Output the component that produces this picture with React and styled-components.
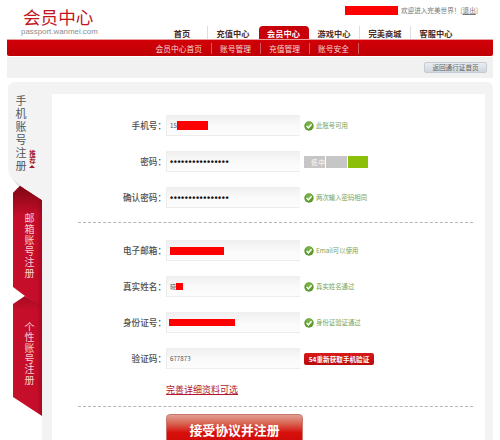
import React from "react";
import styled, { createGlobalStyle } from "styled-components";

const Global = createGlobalStyle`
  html, body { margin: 0; padding: 0; background: #fff; }
  * { box-sizing: border-box; }
`;

const Page = styled.div`
  width: 500px; height: 440px; overflow: hidden; background: #fff;
  font-family: "Liberation Sans", "Noto Sans CJK SC", sans-serif;
`;
const Header = styled.header`display: flex; height: 39px;`;
const Logo = styled.div`display: flex; flex-direction: column; padding: 6px 0 0 21px;`;
const LogoTitle = styled.div`
  font: 400 17.6px/21px "Noto Sans CJK SC", sans-serif; color: #c4151c; margin-left: 2px;
`;
const LogoSub = styled.div`font-size: 7.9px; line-height: 10px; color: #8c8c8c; margin-top: 0;`;
const HeaderRight = styled.div`margin-left: auto; display: flex; flex-direction: column;`;
const TopRow = styled.div`
  display: flex; align-items: center; align-self: flex-end; gap: 3px; margin-top: 6px; margin-right: 22px;
  font: 6.6px/9px "Noto Sans CJK SC", sans-serif; color: #777;
`;
const UserMask = styled.span`display: block; width: 53px; height: 9px; background: #f00;`;
const Logout = styled.span`text-decoration: underline;`;
const Nav = styled.nav`display: flex; margin-top: auto; margin-right: 38px;`;
const NavItem = styled.div`
  width: ${p => (p.$active ? 50 : 51)}px; height: 13px; display: flex; align-items: center; justify-content: center;
  font: 700 8.2px/13px "Noto Sans CJK SC", sans-serif; padding-top: 1px;
  color: ${p => (p.$active ? "#fff" : "#4a2a22")};
  background: ${p => (p.$active ? "#c8000a" : "transparent")};
  border-radius: ${p => (p.$active ? "4px 4px 0 0" : "0")};
  border-right: 1px solid ${p => (p.$sep ? "#ddd" : "transparent")};
`;
const Content = styled.main`padding: 0 7px;`;
const SubNav = styled.div`
  height: 17px; display: flex; align-items: center; padding-left: 140px;
  border-radius: 0 0 2px 2px; border-top: 1px solid #e8a0a0;
  background: linear-gradient(#d20008, #bf0006);
`;
const SubItem = styled.span`
  padding: 0 8.5px; height: 11px; border-right: 1px solid #d9595e;
  font: 7.75px/11px "Noto Sans CJK SC", sans-serif; color: #f6d9d9;
`;
const Toolbar = styled.div`
  height: 21px; margin-top: 1px; background: #f1f1f1; display: flex; align-items: center; justify-content: flex-end; padding-right: 6px;
`;
const BackButton = styled.button`
  width: 63px; height: 11px; padding: 0; border: 1px solid #c5ccd3; border-radius: 2px;
  background: linear-gradient(#e9edf1, #cfd6dd);
  font: 6.6px/9px "Noto Sans CJK SC", sans-serif; color: #666;
`;
const Panel = styled.section`display: flex; margin-top: 4px; height: 360px;`;
const Rail = styled.div`
  width: 35px; flex: none; display: flex; flex-direction: column; align-items: flex-end; position: relative;
  &::before {
    content: ""; position: absolute; left: 3px; top: 93px; width: 18px; height: 13px;
    background: linear-gradient(35deg, #fff 20%, #8f8f8f 75%);
    clip-path: polygon(0 0, 100% 60%, 100% 100%, 50% 100%);
  }
`;
const ActiveTab = styled.div`
  width: 35px; height: 118px; flex: none; position: relative; z-index: 2; background: #f3f3f3;
  clip-path: path("M8 0 H35 V118 L13 103 C8 99 1 95 1 86 V8 Q1 0 8 0 Z");
  padding: 13px 0 0 8px; display: flex; gap: 2px;
`;
const ActiveLabel = styled.div`
  writing-mode: vertical-rl; font: 400 11px/12px "Noto Sans CJK SC", sans-serif; letter-spacing: 2px; color: #555; height: 85px;
`;
const Recommend = styled.div`
  width: 7px; margin-top: 55px; text-align: center;
  font: 700 6.5px/7px "Noto Sans CJK SC", sans-serif; color: #a31a2c;
  &::after {
    content: ""; display: block; width: 0; height: 0; margin: 1px 0 0 0;
    border-left: 3.5px solid transparent; border-right: 3.5px solid transparent; border-bottom: 3px solid #a31a2c;
  }
`;
const RedTab = styled.div`
  width: 29px; height: ${p => p.$h}px; margin-top: ${p => p.$mt}px; flex: none; position: relative;
  clip-path: polygon(${p => p.$shape});
  background: linear-gradient(90deg, #c60f2b 0%, #c50d2a 82%, #a40a1f 100%);
  padding-top: ${p => p.$pt}px; padding-right: 7px;
  writing-mode: vertical-rl; font: 400 10px/11px "Noto Sans CJK SC", sans-serif; letter-spacing: ${p => p.$ls}px; color: #f7cfd4;
  &::before {
    content: ""; position: absolute; left: 0; right: 0; top: 0; height: ${p => p.$sh}px;
    background: linear-gradient(#7f0613, transparent);
    opacity: ${p => p.$shade};
  }
`;
const MainWrap = styled.div`flex: 1; background: #f3f3f3; padding: 12px 8px 0 10px; border-radius: 0 6px 0 0;`;
const Main = styled.div`height: 348px; background: #fff; padding-top: 21px;`;
const Row = styled.div`display: flex; align-items: center; height: 21px; margin-bottom: 15px;`;
const Label = styled.label`
  width: 114px; text-align: right; font: 500 8.6px/21px "Noto Sans CJK SC", sans-serif; color: #4d4d4d;
`;
const Field = styled.div`
  width: 134px; height: 21px; display: flex; align-items: center; padding-left: ${p => p.$pl || 3}px; gap: 0;
  border: 1px solid #ededed; border-right: 0; border-top-color: #efefef;
  background: linear-gradient(#f0f0f0, #fafafa 55%, #fcfcfc);
  font: 6.2px/10px "Noto Sans CJK SC", sans-serif; color: #555;
`;
const Mask = styled.span`display: block; width: ${p => p.$w}px; height: ${p => p.$h}px; background: #f00; margin-left: ${p => p.$ml || 0}px;`;
const Dots = styled.span`
  font: 700 9px/10px "Liberation Sans", sans-serif; color: #111; letter-spacing: 0.55px;
`;
const Hint = styled.div`
  display: flex; align-items: center; gap: 2px; margin-left: 4px;
  font: 6.4px/10px "Noto Sans CJK SC", sans-serif; color: #76a35a;
`;
const Strength = styled.div`display: flex; margin-left: 4px; height: 12px; gap: 1px;`;
const Bar = styled.div`
  width: ${p => p.$w}px; height: 12px; background: ${p => p.$c};
  color: #fff; font: 6.5px/12px "Noto Sans CJK SC", sans-serif; padding-left: 7px; letter-spacing: 1px; white-space: nowrap;
`;
const SmsButton = styled.button`
  margin-left: 4px; width: 70px; height: 12px; padding: 0; border: 0; border-radius: 2px;
  background: linear-gradient(#d81a1a, #b80a0a);
  color: #fff; font: 700 6.6px/12px "Noto Sans CJK SC", sans-serif; white-space: nowrap;
`;
const Divider = styled.hr`
  width: 395px; margin: -1px 0 17px 26px; height: 0; border: 0; border-top: 1px dashed #b5b5b5;
`;
const MoreLink = styled.a`
  display: block; margin: -2px 0 9px 114px; height: 16px;
  font: 400 9px/16px "Noto Sans CJK SC", sans-serif; color: #b3182c; text-decoration: underline;
`;
const Submit = styled.button`
  display: block; width: 137px; height: 34px; margin: -10px 0 0 114px; padding: 0 0 3px; border: 1px solid #c9766c; border-radius: 4px;
  background: linear-gradient(#e0a093 0%, #d8604f 28%, #d8100c 55%, #c80808 100%);
  color: #fff; font: 700 12.9px/28px "Noto Sans CJK SC", sans-serif;
`;

const Check = () => (
  <svg width="10" height="10" viewBox="0 0 10 10">
    <circle cx="5" cy="5" r="4.7" fill="#5c9a30" />
    <circle cx="5" cy="3.6" r="3" fill="#8cc152" opacity="0.6" />
    <path d="M2.6 5 L4.4 6.9 L7.5 3.2" fill="none" stroke="#fff" strokeWidth="1.5" />
  </svg>
);

const navs = [
  ["首页", false, true], ["充值中心", false, false], ["会员中心", true, false],
  ["游戏中心", false, true], ["完美商城", false, true], ["客服中心", false, false],
];
const subs = ["会员中心首页", "账号管理", "充值管理", "账号安全"];

export default function App() {
  return (
    <Page>
      <Global />
      <Header>
        <Logo>
          <LogoTitle>会员中心</LogoTitle>
          <LogoSub>passport.wanmei.com</LogoSub>
        </Logo>
        <HeaderRight>
          <TopRow>
            <UserMask />
            <span>欢迎进入完美世界！[<Logout>退出</Logout>]</span>
          </TopRow>
          <Nav>
            {navs.map(([t, a, s]) => <NavItem key={t} $active={a} $sep={s}>{t}</NavItem>)}
          </Nav>
        </HeaderRight>
      </Header>
      <Content>
        <SubNav>{subs.map(s => <SubItem key={s}>{s}</SubItem>)}</SubNav>
        <Toolbar><BackButton>返回通行证首页</BackButton></Toolbar>
        <Panel>
          <Rail>
            <ActiveTab>
              <ActiveLabel>手机账号注册</ActiveLabel>
              <Recommend>推荐</Recommend>
            </ActiveTab>
            <RedTab $mt={-14} $h={121} $pt={27} $ls={1} $sh={30} $shade={1}
              $shape="0 7px, 7px 0, 100% 14px, 100% 100%, 12px 110px, 0 101px">邮箱账号注册</RedTab>
            <RedTab $mt={-11} $h={120} $pt={26} $ls={0.6} $sh={14} $shade={0.45}
              $shape="0 8px, 12px 0, 100% 10px, 100% 100%, 0 101px">个性账号注册</RedTab>
          </Rail>
          <MainWrap>
            <Main>
              <Row>
                <Label>手机号：</Label>
                <Field>15<Mask $w={31} $h={9} /></Field>
                <Hint><Check />此账号可用</Hint>
              </Row>
              <Row>
                <Label>密码：</Label>
                <Field><Dots>••••••••••••••••</Dots></Field>
                <Strength>
                  <Bar $w={21} $c="#c6c6c6">低中高</Bar>
                  <Bar $w={21} $c="#c6c6c6" />
                  <Bar $w={20} $c="#8cbf0a" />
                </Strength>
              </Row>
              <Row>
                <Label>确认密码：</Label>
                <Field><Dots>••••••••••••••••</Dots></Field>
                <Hint><Check />两次输入密码相同</Hint>
              </Row>
              <Divider />
              <Row>
                <Label>电子邮箱：</Label>
                <Field><Mask $w={54} $h={8} /></Field>
                <Hint><Check />Email可以使用</Hint>
              </Row>
              <Row>
                <Label>真实姓名：</Label>
                <Field>晓<Mask $w={7} $h={7} /></Field>
                <Hint><Check />真实姓名通过</Hint>
              </Row>
              <Row>
                <Label>身份证号：</Label>
                <Field $pl={2}><Mask $w={66} $h={7} /></Field>
                <Hint><Check />身份证验证通过</Hint>
              </Row>
              <Row>
                <Label>验证码：</Label>
                <Field>677873</Field>
                <SmsButton>54重新获取手机验证</SmsButton>
              </Row>
              <MoreLink>完善详细资料可选</MoreLink>
              <Divider />
              <Submit>接受协议并注册</Submit>
            </Main>
          </MainWrap>
        </Panel>
      </Content>
    </Page>
  );
}
